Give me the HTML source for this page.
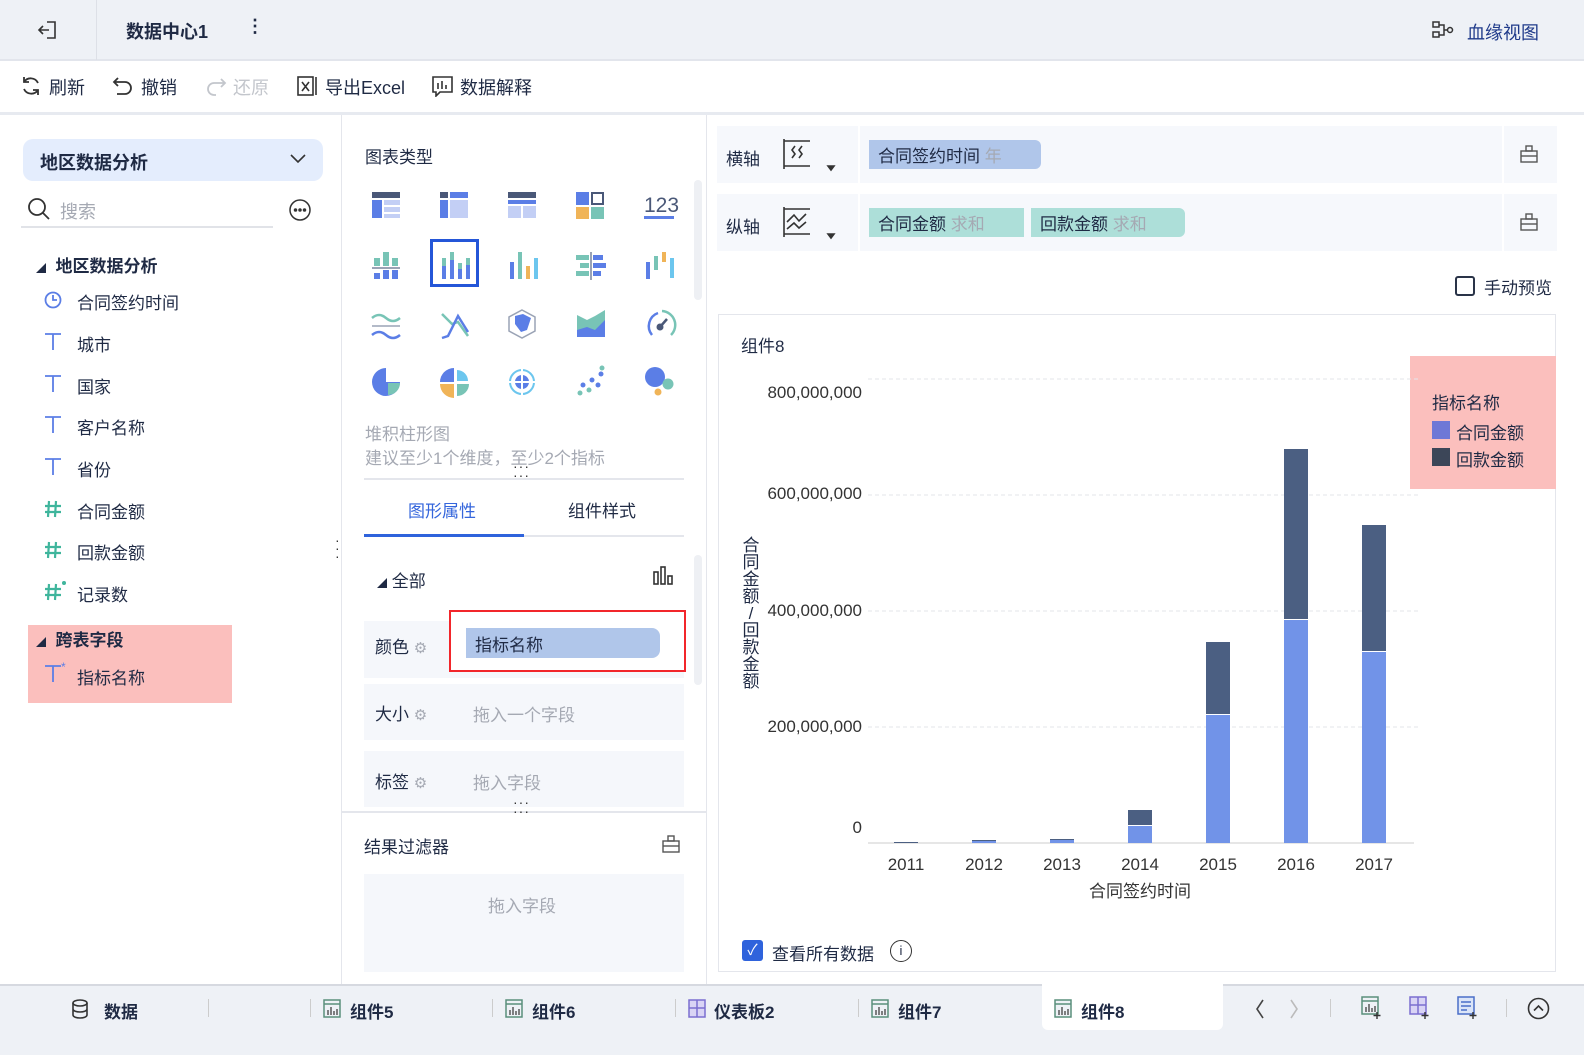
<!DOCTYPE html>
<html><head><meta charset="utf-8">
<style>
*{margin:0;padding:0;box-sizing:border-box}
body{width:1584px;height:1055px;position:relative;overflow:hidden;background:#fff;font-family:"Liberation Sans","Noto Sans CJK SC",sans-serif;color:#1f2a44;font-size:17px}
.a{position:absolute;white-space:nowrap}
.b{font-weight:bold}
.g{color:#a5a9b3}
.dots{position:absolute;color:#333;font-size:14px;letter-spacing:1px}
.ti{position:absolute;top:999px}
</style></head><body>
<!-- top bar -->
<div class="a" style="left:0;top:0;width:1584px;height:61px;background:#eef1f6;border-bottom:2px solid #e2e5ec"></div>
<div class="a" style="left:96px;top:0;width:1px;height:60px;background:#dde0e7"></div>
<svg class="a" style="left:37px;top:19px" width="22" height="22" viewBox="0 0 22 22" fill="none" stroke="#333" stroke-width="1.6"><path d="M10 3h8v16h-8M2 11h10M6 7l-4 4 4 4"/></svg>
<div class="a b" style="left:126px;top:18px;font-size:18px">数据中心1</div>
<div class="a b" style="left:246px;top:16px;font-size:18px">⋮</div>
<svg class="a" style="left:1432px;top:20px" width="22" height="20" viewBox="0 0 22 20" fill="none" stroke="#333" stroke-width="1.5"><rect x="1" y="2" width="6" height="5"/><rect x="1" y="12" width="6" height="5"/><path d="M7 5h5v10H7M12 10h4"/><circle cx="18" cy="10" r="2.5"/></svg>
<div class="a" style="left:1467px;top:19px;font-size:18px;color:#1f3a8a">血缘视图</div>
<!-- toolbar -->
<div class="a" style="left:0;top:112px;width:1584px;height:3px;background:#e7eaf0"></div>
<svg class="a" style="left:20px;top:75px" width="22" height="22" fill="none" stroke="#333" stroke-width="1.8"><path d="M18 8a8 8 0 0 0-14-1M4 14a8 8 0 0 0 14 1"/><path d="M4 2v5h5M18 20v-5h-5"/></svg>
<div class="a" style="left:49px;top:74px;font-size:18px">刷新</div>
<svg class="a" style="left:112px;top:75px" width="22" height="22" fill="none" stroke="#333" stroke-width="1.8"><path d="M6 3L2 7l4 4M2 7h11a6 6 0 0 1 0 12H5"/></svg>
<div class="a" style="left:141px;top:74px;font-size:18px">撤销</div>
<svg class="a" style="left:205px;top:75px" width="22" height="22" fill="none" stroke="#c3c6cc" stroke-width="1.8"><path d="M16 4l4 4-4 4M20 8H9a6 6 0 0 0 0 12h2"/></svg>
<div class="a" style="left:233px;top:74px;font-size:18px;color:#c3c6cc">还原</div>
<svg class="a" style="left:297px;top:75px" width="22" height="22" fill="none" stroke="#333" stroke-width="1.6"><rect x="1" y="2" width="15" height="18"/><path d="M5 7l7 9M12 7l-7 9M19 2v18"/></svg>
<div class="a" style="left:325px;top:74px;font-size:18px">导出Excel</div>
<svg class="a" style="left:432px;top:75px" width="22" height="22" fill="none" stroke="#333" stroke-width="1.6"><path d="M1 2h19v15H8l-4 4v-4H1z"/><path d="M6 8v6M10 6v8M14 10v4"/></svg>
<div class="a" style="left:460px;top:74px;font-size:18px">数据解释</div>
<!-- left panel -->
<div class="a" style="left:341px;top:115px;width:1px;height:870px;background:#e4e6ec"></div>
<div class="a" style="left:23px;top:139px;width:300px;height:42px;background:#e4edfd;border-radius:10px"></div>
<div class="a b" style="left:40px;top:149px;font-size:18px">地区数据分析</div>
<svg class="a" style="left:289px;top:153px" width="18" height="12"><path d="M2 2l7 7 7-7" stroke="#333" stroke-width="1.6" fill="none"/></svg>
<svg class="a" style="left:27px;top:197px" width="24" height="24" fill="none" stroke="#333" stroke-width="1.8"><circle cx="10" cy="10" r="8"/><path d="M16 16l6 6"/></svg>
<div class="a g" style="left:60px;top:198px;font-size:18px">搜索</div>
<div class="a" style="left:21px;top:226px;width:252px;height:2px;background:#e1e3e8"></div>
<svg class="a" style="left:289px;top:199px" width="22" height="22" fill="none" stroke="#333" stroke-width="1.5"><circle cx="11" cy="11" r="10"/><circle cx="6.5" cy="11" r="1" fill="#333"/><circle cx="11" cy="11" r="1" fill="#333"/><circle cx="15.5" cy="11" r="1" fill="#333"/></svg>
<div class="a b" style="left:36px;top:252px;font-size:17px"><span style="font-size:10px">◢</span>&nbsp; 地区数据分析</div>
<svg class="a" style="left:44px;top:291px" width="18" height="18" fill="none" stroke="#5b7ee6" stroke-width="1.8"><circle cx="9" cy="9" r="7.5"/><path d="M9 4v5h4"/></svg>
<div class="a" style="left:77px;top:289px">合同签约时间</div>
<svg width="0" height="0" style="position:absolute"><defs><g id="T"><path d="M1 2h16M9 2v16" stroke="#5b7ee6" stroke-width="1.8" fill="none"/></g><g id="H"><path d="M5 2l-1 16M12 2l-1 16M1 7h16M1 13h16" stroke="#3fb59c" stroke-width="2.2" fill="none"/></g></defs></svg>
<svg class="a" style="left:44px;top:332px" width="18" height="20"><use href="#T"/></svg><div class="a" style="left:77px;top:331px">城市</div>
<svg class="a" style="left:44px;top:374px" width="18" height="20"><use href="#T"/></svg><div class="a" style="left:77px;top:373px">国家</div>
<svg class="a" style="left:44px;top:415px" width="18" height="20"><use href="#T"/></svg><div class="a" style="left:77px;top:414px">客户名称</div>
<svg class="a" style="left:44px;top:457px" width="18" height="20"><use href="#T"/></svg><div class="a" style="left:77px;top:456px">省份</div>
<svg class="a" style="left:44px;top:499px" width="18" height="20"><use href="#H"/></svg><div class="a" style="left:77px;top:498px">合同金额</div>
<svg class="a" style="left:44px;top:540px" width="18" height="20"><use href="#H"/></svg><div class="a" style="left:77px;top:539px">回款金额</div>
<svg class="a" style="left:44px;top:580px" width="24" height="22"><g transform="translate(0,2)"><use href="#H"/></g><circle cx="20" cy="3" r="2" fill="#3fb59c"/></svg><div class="a" style="left:77px;top:581px">记录数</div>
<div class="a" style="left:28px;top:625px;width:204px;height:78px;background:#fbbfbd"></div>
<div class="a b" style="left:36px;top:626px"><span style="font-size:10px">◢</span>&nbsp; 跨表字段</div>
<svg class="a" style="left:44px;top:662px" width="24" height="22"><g transform="translate(0,2)"><use href="#T"/></g><text x="17" y="9" font-size="12" fill="#5b7ee6">*</text></svg><div class="a" style="left:77px;top:664px">指标名称</div>
<div class="dots" style="left:335px;top:536px;line-height:8px">·<br>·<br>·</div>
<!-- middle panel -->
<div class="a" style="left:706px;top:115px;width:1px;height:870px;background:#e4e6ec"></div>
<div class="a" style="left:365px;top:143px">图表类型</div>
<div class="a" style="left:694px;top:180px;width:8px;height:120px;background:#eef0f4;border-radius:4px"></div>
<svg class="a" style="left:360px;top:180px" width="330" height="220">
<g transform="translate(12,12)"><rect width="28" height="6" fill="#4a5878"/><rect y="8" width="10" height="18" fill="#5b7ee6"/><rect x="12" y="8" width="16" height="5" fill="#c3cff5"/><rect x="12" y="15" width="16" height="5" fill="#c3cff5"/><rect x="12" y="22" width="16" height="4" fill="#c3cff5"/></g>
<g transform="translate(80,12)"><rect width="8" height="6" fill="#4a5878"/><rect x="10" width="18" height="6" fill="#5b7ee6"/><rect y="8" width="8" height="18" fill="#5b7ee6"/><rect x="10" y="8" width="18" height="18" fill="#c3cff5"/></g>
<g transform="translate(148,12)"><rect width="28" height="6" fill="#4a5878"/><rect y="8" width="28" height="4" fill="#5b7ee6"/><rect y="14" width="13" height="12" fill="#c3cff5"/><rect x="15" y="14" width="13" height="12" fill="#c3cff5"/></g>
<g transform="translate(216,12)"><rect width="13" height="13" fill="#5b7ee6"/><rect x="16" y="1" width="11" height="11" fill="none" stroke="#4a5878" stroke-width="2"/><rect y="15" width="13" height="12" fill="#f0b458"/><rect x="15" y="15" width="13" height="12" fill="#78c4b6"/></g>
<text x="284" y="32" font-size="21" fill="#4a5878" font-family="Liberation Sans">123</text><rect x="284" y="36" width="30" height="3" fill="#5b7ee6"/>
<g transform="translate(12,72)"><rect x="2" y="6" width="6" height="8" fill="#78c4b6"/><rect x="11" y="0" width="6" height="14" fill="#78c4b6"/><rect x="20" y="6" width="6" height="8" fill="#78c4b6"/><rect y="15" width="28" height="2" fill="#9aa3b5"/><rect x="2" y="21" width="6" height="6" fill="#5b7ee6"/><rect x="11" y="18" width="6" height="9" fill="#5b7ee6"/><rect x="20" y="18" width="6" height="9" fill="#5b7ee6"/></g>
<rect x="71.5" y="60.5" width="46" height="45" fill="none" stroke="#2456d8" stroke-width="3"/>
<g transform="translate(82,72)"><rect x="0" y="6" width="4" height="8" fill="#78c4b6"/><rect x="0" y="14" width="4" height="13" fill="#5b7ee6"/><rect x="8" y="0" width="4" height="8" fill="#78c4b6"/><rect x="8" y="8" width="4" height="19" fill="#5b7ee6"/><rect x="16" y="11" width="4" height="6" fill="#78c4b6"/><rect x="16" y="17" width="4" height="10" fill="#5b7ee6"/><rect x="24" y="6" width="4" height="7" fill="#78c4b6"/><rect x="24" y="13" width="4" height="14" fill="#5b7ee6"/></g>
<g transform="translate(150,72)"><rect x="0" y="10" width="4" height="17" fill="#5b7ee6"/><rect x="8" y="0" width="4" height="27" fill="#78c4b6"/><rect x="16" y="14" width="4" height="13" fill="#f0b458"/><rect x="24" y="6" width="4" height="21" fill="#6cc6ee"/></g>
<g transform="translate(216,72)"><rect x="14" y="0" width="2" height="28" fill="#9aa3b5"/><rect x="0" y="3" width="13" height="5" fill="#78c4b6"/><rect x="17" y="3" width="10" height="5" fill="#5b7ee6"/><rect x="4" y="11" width="9" height="5" fill="#78c4b6"/><rect x="17" y="11" width="13" height="5" fill="#5b7ee6"/><rect x="0" y="19" width="13" height="5" fill="#78c4b6"/><rect x="17" y="19" width="8" height="5" fill="#5b7ee6"/></g>
<g transform="translate(286,72)"><rect x="0" y="10" width="4" height="17" fill="#5b7ee6"/><rect x="8" y="4" width="4" height="14" fill="#78c4b6"/><rect x="16" y="0" width="4" height="10" fill="#f0b458"/><rect x="24" y="6" width="4" height="20" fill="#6cc6ee"/></g>
<g fill="none" stroke-width="2.5"><path d="M12 138q7-6 14 0t14 0" stroke="#78c4b6"/><path d="M12 146h28" stroke="#9aa3b5" stroke-width="1.5"/><path d="M12 155q7-6 14 0t14 0" stroke="#5b7ee6"/>
<path d="M82 134l10 10 6 -2 10 14" stroke="#78c4b6"/><path d="M82 158l6-2 10-20 10 16" stroke="#5b7ee6"/>
<path d="M162 130l13 7v14l-13 7-13-7v-14z" stroke="#9aa3b5" stroke-width="1.5"/><path d="M155 136l8-2 8 4-4 12-6 2-6-8z" fill="#5b7ee6" stroke="none"/>
<path d="M217 135l10 5 8-4 10-6v27h-28z" fill="#78c4b6" stroke="none"/><path d="M217 150l10-3 8 3 10-10v17h-28z" fill="#5b7ee6" stroke="none"/>
<path d="M292 155a14 14 0 0 1 6-22" stroke="#5b7ee6"/><path d="M302 131a14 14 0 0 1 9 24" stroke="#78c4b6"/></g>
<circle cx="300" cy="147" r="3.5" fill="#4a5878"/><path d="M300 147l7-8" stroke="#4a5878" stroke-width="2.5"/>
<path d="M40 202a14 14 0 1 1 -14 -14v14z" fill="#5b7ee6"/><path d="M28 203h12a12 12 0 0 1 -12 12z" fill="#78c4b6"/>
<path d="M94 188a14 14 0 0 0 -14 14h14z" fill="#5b7ee6"/><path d="M97 190a11 11 0 0 1 11 11h-11z" fill="#6cc6ee"/><path d="M80 204a14 14 0 0 0 14 14v-14z" fill="#f0b458"/><path d="M97 204h12a12 12 0 0 1 -12 12z" fill="#78c4b6"/>
<circle cx="162" cy="202" r="12" fill="none" stroke="#6cc6ee" stroke-width="2"/><circle cx="162" cy="202" r="7" fill="#5b7ee6"/><path d="M162 188v28M148 202h28" stroke="#fff" stroke-width="2"/>
<g fill="#5b7ee6"><circle cx="223" cy="205" r="2.5"/><circle cx="232" cy="200" r="2.5"/><circle cx="241" cy="194" r="2.5"/><circle cx="238" cy="205" r="2.5"/></g><g fill="#78c4b6"><circle cx="220" cy="213" r="2.5"/><circle cx="229" cy="210" r="2.5"/><circle cx="242" cy="188" r="2.5"/></g>
<circle cx="295" cy="197" r="10" fill="#5b7ee6"/><circle cx="308" cy="204" r="5.5" fill="#78c4b6"/><circle cx="298" cy="212" r="3.5" fill="#f0b458"/>
</svg>
<div class="a g" style="left:365px;top:420px">堆积柱形图</div>
<div class="a g" style="left:365px;top:444px">建议至少1个维度，至少2个指标</div>
<div class="dots" style="left:513px;top:462px;line-height:9px">···<br>···</div>
<div class="a" style="left:364px;top:478px;width:320px;height:2px;background:#e4e6ec"></div>
<div class="a" style="left:408px;top:497px;color:#3566dc">图形属性</div>
<div class="a" style="left:568px;top:497px">组件样式</div>
<div class="a" style="left:364px;top:535px;width:320px;height:2px;background:#e4e6ec"></div>
<div class="a" style="left:364px;top:534px;width:160px;height:3px;background:#2f63dc"></div>
<div class="a" style="left:694px;top:555px;width:8px;height:130px;background:#eef0f4;border-radius:4px"></div>
<div class="a" style="left:377px;top:567px"><span style="font-size:10px">◢</span> 全部</div>
<svg class="a" style="left:653px;top:566px" width="22" height="20" fill="none" stroke="#333" stroke-width="1.6"><rect x="1" y="6" width="4" height="12"/><rect x="8" y="1" width="4" height="17"/><rect x="15" y="10" width="4" height="8"/></svg>
<div class="a" style="left:364px;top:621px;width:320px;height:57px;background:#f5f7fb"></div>
<div class="a" style="left:375px;top:633px">颜色 <span class="g" style="font-size:15px">⚙</span></div>
<div class="a" style="left:449px;top:610px;width:237px;height:62px;border:2px solid #f2262b;background:#fff"></div>
<div class="a" style="left:466px;top:628px;width:194px;height:30px;background:#b0c6ea;border-radius:0 8px 8px 0;padding:3px 9px">指标名称</div>
<div class="a" style="left:364px;top:684px;width:320px;height:56px;background:#f5f7fb"></div>
<div class="a" style="left:375px;top:700px">大小 <span class="g" style="font-size:15px">⚙</span></div>
<div class="a g" style="left:473px;top:701px">拖入一个字段</div>
<div class="a" style="left:364px;top:751px;width:320px;height:56px;background:#f5f7fb"></div>
<div class="a" style="left:375px;top:768px">标签 <span class="g" style="font-size:15px">⚙</span></div>
<div class="a g" style="left:473px;top:769px">拖入字段</div>
<div class="a" style="left:342px;top:811px;width:364px;height:2px;background:#e4e6ec"></div>
<div class="dots" style="left:513px;top:798px;line-height:9px">···<br>···</div>
<div class="a" style="left:364px;top:833px">结果过滤器</div>
<svg class="a" style="left:661px;top:834px" width="20" height="20" fill="none" stroke="#555" stroke-width="1.4"><rect x="2" y="7" width="16" height="11"/><rect x="7" y="2" width="6" height="5"/><path d="M2 12h16"/></svg>
<div class="a" style="left:364px;top:874px;width:320px;height:98px;background:#f5f7fb"></div>
<div class="a g" style="left:488px;top:892px">拖入字段</div>
<!-- right: axes -->
<div class="a" style="left:717px;top:126px;width:840px;height:57px;background:#f6f8fc"></div>
<div class="a" style="left:717px;top:194px;width:840px;height:57px;background:#f6f8fc"></div>
<div class="a" style="left:858px;top:126px;width:2px;height:125px;background:#fff"></div>
<div class="a" style="left:1502px;top:126px;width:2px;height:125px;background:#fff"></div>
<div class="a" style="left:717px;top:183px;width:840px;height:11px;background:#fff"></div>
<div class="a" style="left:726px;top:145px">横轴</div>
<div class="a" style="left:726px;top:213px">纵轴</div>
<svg class="a" style="left:781px;top:138px" width="60" height="38" fill="none" stroke="#333" stroke-width="1.6"><path d="M3 1v30M3 3h26M3 28h26M14 8l-3 4 3 4-3 4M21 8l-3 4 3 4-3 4"/><path d="M47 28l3 4 3-4z" fill="#333"/></svg>
<svg class="a" style="left:781px;top:206px" width="60" height="38" fill="none" stroke="#333" stroke-width="1.6"><path d="M3 1v30M3 3h26M3 28h26M6 16l7-7 5 6 7-7M6 23l7-6 5 5 7-6"/><path d="M47 28l3 4 3-4z" fill="#333"/></svg>
<div class="a" style="left:869px;top:140px;width:172px;height:29px;background:#b0c6ea;border-radius:0 6px 6px 0;padding:2px 9px">合同签约时间 <span class="g">年</span></div>
<div class="a" style="left:869px;top:208px;width:155px;height:29px;background:#addfd9;padding:2px 9px">合同金额 <span class="g">求和</span></div>
<div class="a" style="left:1031px;top:208px;width:154px;height:29px;background:#addfd9;border-radius:0 6px 6px 0;padding:2px 9px">回款金额 <span class="g">求和</span></div>
<svg class="a" style="left:1519px;top:144px" width="20" height="20" fill="none" stroke="#555" stroke-width="1.4"><rect x="2" y="7" width="16" height="11"/><rect x="7" y="2" width="6" height="5"/><path d="M2 12h16"/></svg>
<svg class="a" style="left:1519px;top:212px" width="20" height="20" fill="none" stroke="#555" stroke-width="1.4"><rect x="2" y="7" width="16" height="11"/><rect x="7" y="2" width="6" height="5"/><path d="M2 12h16"/></svg>
<div class="a" style="left:1455px;top:276px;width:20px;height:20px;border:2px solid #2a3448;border-radius:3px"></div>
<div class="a" style="left:1484px;top:274px">手动预览</div>
<!-- chart box -->
<div class="a" style="left:718px;top:314px;width:838px;height:658px;border:1px solid #e4e6ec"></div>
<div class="a" style="left:741px;top:332px">组件8</div>
<div class="a" style="left:1410px;top:356px;width:146px;height:133px;background:#fbbfbd"></div>
<div class="a" style="left:1432px;top:389px">指标名称</div>
<div class="a" style="left:1432px;top:421px;width:18px;height:18px;background:#6e78d6"></div><div class="a" style="left:1456px;top:419px">合同金额</div>
<div class="a" style="left:1432px;top:448px;width:18px;height:18px;background:#3c4658"></div><div class="a" style="left:1456px;top:446px">回款金额</div>
<svg class="a" style="left:718px;top:360px" width="700" height="560" font-family="Liberation Sans" font-size="17" fill="#333">
<g stroke="#e3e5ea" stroke-dasharray="4 3"><path d="M150 19h560M150 135h560M150 251h560M150 367h560"/></g>
<path d="M150 483h546" stroke="#ccc"/>
<g text-anchor="end"><text x="144" y="38">800,000,000</text><text x="144" y="139">600,000,000</text><text x="144" y="256">400,000,000</text><text x="144" y="372">200,000,000</text><text x="144" y="473">0</text></g>
<g fill="#7193e8"><rect x="176" y="482" width="24" height="1"/><rect x="254" y="481" width="24" height="2"/><rect x="332" y="480" width="24" height="3"/><rect x="410" y="466" width="24" height="17"/><rect x="488" y="355" width="24" height="128"/><rect x="566" y="260" width="24" height="223"/><rect x="644" y="292" width="24" height="191"/></g>
<g fill="#4b5f82"><rect x="176" y="482" width="24" height="1"/><rect x="254" y="480" width="24" height="1"/><rect x="332" y="479" width="24" height="1"/><rect x="410" y="450" width="24" height="15"/><rect x="488" y="282" width="24" height="72"/><rect x="566" y="89" width="24" height="170"/><rect x="644" y="165" width="24" height="126"/></g>
<g text-anchor="middle"><text x="188" y="510">2011</text><text x="266" y="510">2012</text><text x="344" y="510">2013</text><text x="422" y="510">2014</text><text x="500" y="510">2015</text><text x="578" y="510">2016</text><text x="656" y="510">2017</text><text x="422" y="537">合同签约时间</text></g>
</svg>
<div class="a" style="left:741px;top:537px;font-size:17px;line-height:17px;white-space:normal;width:20px;text-align:center">合<br>同<br>金<br>额<br>/<br>回<br>款<br>金<br>额</div>
<div class="a" style="left:742px;top:940px;width:21px;height:21px;background:#2f63dc;border-radius:3px;color:#fff;font-size:15px;text-align:center;line-height:21px">✓</div>
<div class="a" style="left:772px;top:940px">查看所有数据</div>
<div class="a" style="left:890px;top:940px;width:22px;height:22px;border:1.6px solid #333;border-radius:50%;font-size:13px;text-align:center;line-height:19px" >i</div>
<!-- bottom tabs -->
<div class="a" style="left:0;top:984px;width:1584px;height:71px;background:#eef1f6;border-top:2px solid #d6d9e0"></div>
<div class="a" style="left:1042px;top:984px;width:181px;height:46px;background:#fff;border-radius:0 0 6px 6px"></div>
<svg width="0" height="0" style="position:absolute"><defs><g id="C"><rect x="1" y="1" width="16" height="17" fill="#eef1f6" stroke="#5a8f7c" stroke-width="1.5"/><path d="M1 5h16" stroke="#5a8f7c" stroke-width="1.5"/><path d="M5 16v-5M8 16v-8M11 16v-4M14 16v-6" stroke="#333" stroke-width="1.2"/></g><g id="D"><rect x="1" y="1" width="16" height="17" fill="#d9d4f5" stroke="#7b6fd0" stroke-width="1.5"/><path d="M9 1v17M1 9h16" stroke="#7b6fd0" stroke-width="1.5"/></g></defs></svg>
<svg class="a" style="left:70px;top:999px" width="20" height="20" fill="none" stroke="#333" stroke-width="1.6"><ellipse cx="10" cy="4" rx="7" ry="3"/><path d="M3 4v12c0 4 14 4 14 0V4M3 10c0 4 14 4 14 0"/></svg>
<div class="a b" style="left:104px;top:998px">数据</div>
<div class="a" style="left:208px;top:999px;width:1px;height:18px;background:#ccc"></div>
<div class="a" style="left:310px;top:999px;width:1px;height:18px;background:#ccc"></div>
<svg class="ti" style="left:323px" width="18" height="20"><use href="#C"/></svg><div class="a b" style="left:350px;top:998px">组件5</div>
<div class="a" style="left:492px;top:999px;width:1px;height:18px;background:#ccc"></div>
<svg class="ti" style="left:505px" width="18" height="20"><use href="#C"/></svg><div class="a b" style="left:532px;top:998px">组件6</div>
<div class="a" style="left:675px;top:999px;width:1px;height:18px;background:#ccc"></div>
<svg class="ti" style="left:688px" width="18" height="20"><use href="#D"/></svg><div class="a b" style="left:714px;top:998px">仪表板2</div>
<div class="a" style="left:858px;top:999px;width:1px;height:18px;background:#ccc"></div>
<svg class="ti" style="left:871px" width="18" height="20"><use href="#C"/></svg><div class="a b" style="left:898px;top:998px">组件7</div>
<svg class="ti" style="left:1054px" width="18" height="20"><use href="#C"/></svg><div class="a b" style="left:1081px;top:998px">组件8</div>
<svg class="a" style="left:1250px;top:997px" width="60" height="24" fill="none" stroke-width="1.6"><path d="M13 3l-6 9 6 9" stroke="#444"/><path d="M41 3l6 9-6 9" stroke="#bbb"/></svg>
<div class="a" style="left:1330px;top:999px;width:1px;height:18px;background:#ccc"></div>
<svg class="a" style="left:1361px;top:996px" width="24" height="24"><use href="#C"/><path d="M16 16v7M12.5 19.5h7" stroke="#333" stroke-width="1.4"/></svg>
<svg class="a" style="left:1409px;top:996px" width="24" height="24"><use href="#D"/><path d="M16 16v7M12.5 19.5h7" stroke="#333" stroke-width="1.4"/></svg>
<svg class="a" style="left:1457px;top:996px" width="24" height="24"><rect x="1" y="1" width="16" height="17" fill="#dbe5f8" stroke="#4a6fc8" stroke-width="1.5"/><path d="M4 6h10M4 10h10M4 14h6" stroke="#4a6fc8" stroke-width="1.4"/><path d="M16 16v7M12.5 19.5h7" stroke="#333" stroke-width="1.4"/></svg>
<div class="a" style="left:1506px;top:999px;width:1px;height:18px;background:#ccc"></div>
<svg class="a" style="left:1527px;top:997px" width="23" height="23" fill="none" stroke="#333" stroke-width="1.6"><circle cx="11.5" cy="11.5" r="10"/><path d="M7 13.5l4.5-4.5 4.5 4.5"/></svg>
</body></html>
